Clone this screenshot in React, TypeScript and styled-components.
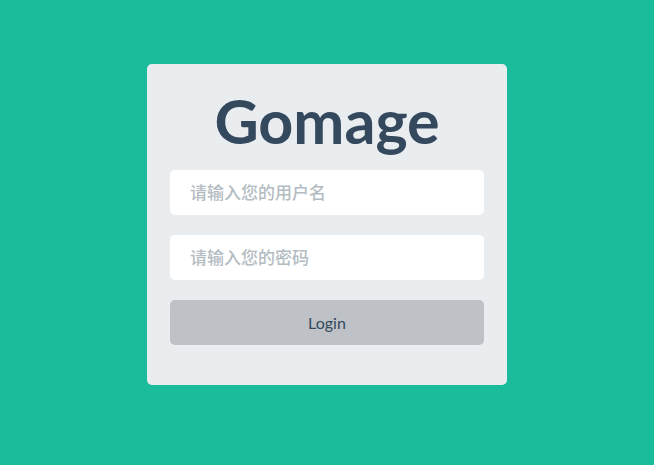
import React from "react";
import styled, { createGlobalStyle } from "styled-components";

const Global = createGlobalStyle`
  html, body { margin: 0; padding: 0; }
  body {
    background: #1abc9c;
    font-family: Lato, "Noto Sans CJK SC", sans-serif;
  }
`;

const Page = styled.div`
  width: 654px;
  height: 465px;
  display: flex;
  justify-content: center;
  padding-top: 64px;
  box-sizing: border-box;
`;

const Card = styled.form`
  width: 360px;
  height: 321px;
  box-sizing: border-box;
  background: #eaedf0;
  border-radius: 5px;
  padding: 0 23px 40px;
  display: flex;
  flex-direction: column;
`;

const Title = styled.h1`
  margin: 0;
  height: 106px;
  box-sizing: border-box;
  padding-top: 21px;
  font-family: Lato, sans-serif;
  font-weight: 700;
  font-size: 61px;
  line-height: 72px;
  color: #34495e;
  text-align: center;
`;

const Field = styled.input`
  height: 45px;
  border: none;
  border-radius: 5px;
  background: #ffffff;
  padding: 0 20px;
  margin-bottom: 20px;
  font-family: Lato, "Noto Sans CJK SC", sans-serif;
  font-size: 17px;
  color: #34495e;
  outline: none;
  &::placeholder {
    color: #b3bcc2;
    font-weight: 500;
  }
`;

const Button = styled.button`
  height: 45px;
  border: none;
  border-radius: 5px;
  background: #bec2c6;
  color: #34495e;
  font-family: Lato, sans-serif;
  font-size: 16px;
  cursor: pointer;
`;

export default function App() {
  return (
    <>
      <Global />
      <Page>
        <Card onSubmit={(e) => e.preventDefault()}>
          <Title>Gomage</Title>
          <Field type="text" placeholder="请输入您的用户名" />
          <Field type="password" placeholder="请输入您的密码" />
          <Button type="submit">Login</Button>
        </Card>
      </Page>
    </>
  );
}
